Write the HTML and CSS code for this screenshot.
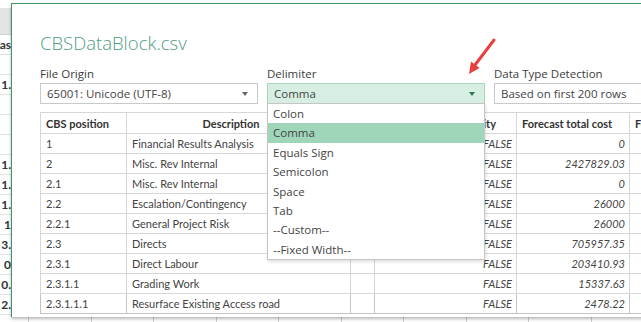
FILE: index.html
```html
<!DOCTYPE html>
<html lang="en">
<head>
    <meta charset="UTF-8">
    <title>CBSDataBlock.csv - Import</title>
    <link rel="stylesheet" href="styles.css">
</head>
<body>
<div class="desk">
    <!-- worksheet peeking out behind the import window -->
    <div class="sheet">
        <div class="sheet-head"></div>
        <div class="sheet-row"><span class="stub"><span>Bas</span></span></div>
        <div class="sheet-row"><span class="stub"></span></div>
        <div class="sheet-row"><span class="stub"><span>1.</span></span></div>
        <div class="sheet-row"><span class="stub"></span></div>
        <div class="sheet-row"><span class="stub"></span></div>
        <div class="sheet-row"><span class="stub"></span></div>
        <div class="sheet-row"><span class="stub"><span>1.</span></span></div>
        <div class="sheet-row"><span class="stub"><span>1.</span></span></div>
        <div class="sheet-row"><span class="stub"><span>1.</span></span></div>
        <div class="sheet-row"><span class="stub"><span>1</span></span></div>
        <div class="sheet-row"><span class="stub"><span>3.</span></span></div>
        <div class="sheet-row"><span class="stub"><span>0</span></span></div>
        <div class="sheet-row"><span class="stub"><span>0.</span></span></div>
        <div class="sheet-row"><span class="stub"><span>2.</span></span></div>
        <div class="sheet-grid">
            <span></span><span></span><span></span><span></span><span></span>
            <span></span><span></span><span></span><span></span><span></span><span></span>
        </div>
    </div>

    <div class="window">
        <h1 class="title">CBSDataBlock.csv</h1>

        <div class="options">
            <div class="field origin">
                <label>File Origin</label>
                <div class="select">65001: Unicode (UTF-8)<span class="caret"></span></div>
            </div>
            <div class="field delim">
                <label>Delimiter</label>
                <div class="select open">Comma<span class="caret"></span></div>
            </div>
            <div class="field detect">
                <label>Data Type Detection</label>
                <div class="select">Based on first 200 rows<span class="caret"></span></div>
            </div>
        </div>

        <table class="preview">
            <thead>
            <tr>
                <th class="c-pos">CBS position</th>
                <th class="c-desc center">Description</th>
                <th class="c-gap"></th>
                <th class="c-flag">Contingency Quantity</th>
                <th class="c-cost">Forecast total cost</th>
                <th class="c-more">Forecast</th>
            </tr>
            </thead>
            <tbody>
            <tr><td>1</td><td>Financial Results Analysis</td><td></td><td class="num">FALSE</td><td class="num">0</td><td></td></tr>
            <tr><td>2</td><td>Misc. Rev Internal</td><td></td><td class="num">FALSE</td><td class="num">2427829.03</td><td></td></tr>
            <tr><td>2.1</td><td>Misc. Rev Internal</td><td></td><td class="num">FALSE</td><td class="num">0</td><td></td></tr>
            <tr><td>2.2</td><td>Escalation/Contingency</td><td></td><td class="num">FALSE</td><td class="num">26000</td><td></td></tr>
            <tr><td>2.2.1</td><td>General Project Risk</td><td></td><td class="num">FALSE</td><td class="num">26000</td><td></td></tr>
            <tr><td>2.3</td><td>Directs</td><td></td><td class="num">FALSE</td><td class="num">705957.35</td><td></td></tr>
            <tr><td>2.3.1</td><td>Direct Labour</td><td></td><td class="num">FALSE</td><td class="num">203410.93</td><td></td></tr>
            <tr><td>2.3.1.1</td><td>Grading Work</td><td></td><td class="num">FALSE</td><td class="num">15337.63</td><td></td></tr>
            <tr><td>2.3.1.1.1</td><td>Resurface Existing Access road</td><td></td><td class="num">FALSE</td><td class="num">2478.22</td><td></td></tr>
            </tbody>
        </table>

        <ul class="dropdown">
            <li>Colon</li>
            <li class="active">Comma</li>
            <li>Equals Sign</li>
            <li>Semicolon</li>
            <li>Space</li>
            <li>Tab</li>
            <li>--Custom--</li>
            <li>--Fixed Width--</li>
        </ul>
    </div>

    <svg class="pointer" width="40" height="44" viewBox="460 36 40 44">
        <line x1="494" y1="40" x2="475" y2="65" stroke="#e8403f" stroke-width="3" stroke-linecap="round"/>
        <polygon points="469,74 479.6,68 471,61.5" fill="#e8403f"/>
    </svg>
</div>
</body>
</html>
```

FILE: styles.css
```css
* {
    margin: 0;
    padding: 0;
    box-sizing: border-box;
}

body {
    background: #fff;
    overflow: hidden;
}

.desk {
    position: relative;
    width: 641px;
    height: 322px;
    overflow: hidden;
    font-family: "Open Sans", "Noto Sans", sans-serif;
    color: #444;
}

/* worksheet behind */
.sheet {
    display: flex;
    flex-direction: column;
    padding-top: 8px;
    font-family: "Lato", "Liberation Sans", sans-serif;
    font-size: 12px;
    font-weight: 700;
    color: #333;
}

.sheet-head {
    height: 27px;
    width: 11px;
    background: #e4e4e4;
    border-bottom: 1px solid #d0d0d0;
}

.sheet-row {
    height: 20px;
    border-bottom: 1px solid #e2e2e2;
    display: flex;
    align-items: center;
}

.stub {
    width: 11px;
    display: flex;
    justify-content: flex-end;
    overflow: hidden;
}

.stub span {
    flex-shrink: 0;
}

.sheet-grid {
    display: flex;
    height: 20px;
    padding-left: 28px;
}

.sheet-grid span {
    width: 62.5px;
    flex-shrink: 0;
    border-left: 1px solid #cfcfcf;
}

/* import window */
.window {
    position: absolute;
    left: 11px;
    top: 3px;
    width: 660px;
    height: 314px;
    background: #fff;
    border-left: 1px solid #3f9464;
    border-top: 1px solid #3f9464;
    box-shadow: 0 2px 3px rgba(0, 0, 0, 0.28);
    padding: 0 0 0 28px;
}

.title {
    margin-top: 25px;
    height: 27px;
    line-height: 27px;
    font-size: 18.5px;
    font-weight: 300;
    color: #4f9e80;
}

.options {
    display: flex;
    gap: 9px;
    margin-top: 10px;
}

.field {
    width: 218px;
    flex-shrink: 0;
}

.field.detect {
    width: 180px;
}

.field label {
    display: block;
    height: 17px;
    line-height: 16px;
    font-size: 11.5px;
    color: #3c3c3c;
}

.select {
    position: relative;
    height: 21px;
    line-height: 19px;
    border: 1px solid #c9c9c9;
    padding: 0 6px;
    font-size: 11.5px;
    color: #444;
    background: #fff;
}

.select.open {
    background: #d7efe2;
    border-color: #a6d8bb;
}

.caret {
    position: absolute;
    right: 9px;
    top: 8px;
    border-left: 3.5px solid transparent;
    border-right: 3.5px solid transparent;
    border-top: 4px solid #666;
}

.select.open .caret {
    border-top-color: #2f7a50;
}

.detect .caret {
    display: none;
}

/* preview table */
.preview {
    margin-top: 8px;
    border-collapse: collapse;
    table-layout: fixed;
    width: 700px;
    font-family: "Lato", "Liberation Sans", sans-serif;
    font-size: 11px;
    color: #444;
}

.preview th,
.preview td {
    border: 1px solid #d7d7d7;
    padding: 0 5px;
    white-space: nowrap;
    overflow: hidden;
    text-align: left;
}

.preview th {
    height: 21px;
    font-weight: 700;
    color: #333;
}

.preview td {
    height: 20px;
}

.preview th.center {
    text-align: center;
    padding-right: 20px;
}

.preview th.c-flag {
    text-align: right;
    padding-right: 20px;
}

.preview td.num {
    text-align: right;
    font-style: italic;
    padding-right: 4px;
}

.c-pos { width: 86px; }
.c-desc { width: 224px; }
.c-gap { width: 24px; }
.c-flag { width: 142px; }
.c-cost { width: 113px; }
.c-more { width: 111px; }

.preview thead tr,
.preview tbody tr:last-child td {
    border-color: #c4c4c4;
}

/* open delimiter list */
.dropdown {
    position: absolute;
    left: 255px;
    top: 99px;
    width: 218px;
    height: 157px;
    list-style: none;
    background: #fff;
    border: 1px solid #c5c5c5;
    box-shadow: 1px 2px 3px rgba(0, 0, 0, 0.12);
    font-size: 11.5px;
    color: #444;
}

.dropdown li {
    height: 19.4px;
    line-height: 19.4px;
    padding-left: 5px;
}

.dropdown li.active {
    background: #9fd6b9;
}

.pointer {
    position: absolute;
    left: 460px;
    top: 36px;
}
```
